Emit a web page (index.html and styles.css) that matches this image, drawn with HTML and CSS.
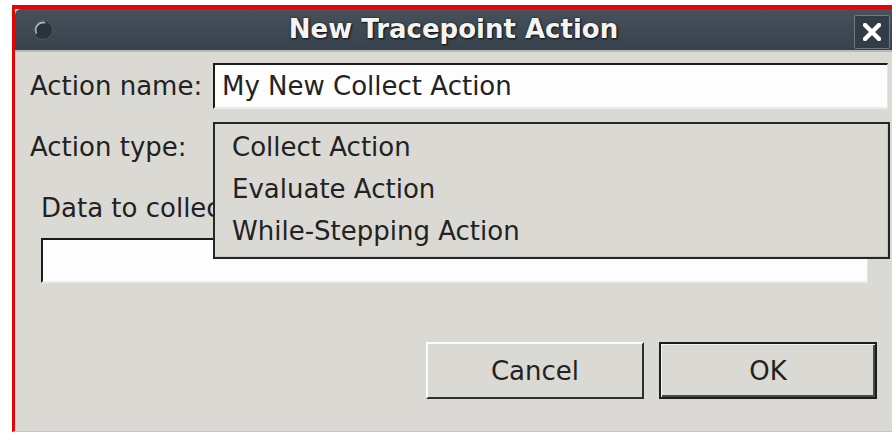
FILE: index.html
```html
<!DOCTYPE html>
<html lang="en">
<head>
<meta charset="utf-8">
<title>New Tracepoint Action</title>
<link rel="stylesheet" href="styles.css">
</head>
<body>
<div class="frame">
  <header class="titlebar">
    <div class="tb-left">
      <svg class="win-menu" width="22" height="22" viewBox="0 0 22 22">
        <circle cx="11" cy="11" r="9.5" fill="#29333c" stroke="#4d5862" stroke-width="1"/>
        <path d="M4.3 14 A7.4 7.4 0 0 1 12.5 3.7" fill="none" stroke="#aab3bb" stroke-width="1.8" stroke-linecap="round"/>
      </svg>
    </div>
    <h1 class="title">New Tracepoint Action</h1>
    <div class="tb-right">
      <button class="close" type="button" aria-label="Close">
        <svg width="18" height="18" viewBox="0 0 18 18">
          <path d="M2 2 L16 16 M16 2 L2 16" stroke="#fff" stroke-width="4.4" stroke-linecap="square"/>
        </svg>
      </button>
    </div>
  </header>

  <main class="content">
    <div class="row">
      <label class="label" for="action-name">Action name:</label>
      <div class="entry"><input id="action-name" class="entry-input" type="text" value="My New Collect Action"></div>
    </div>

    <div class="row row-type">
      <span class="label">Action type:</span>
      <div class="combo">
        <ul class="menu">
          <li class="menu-item">Collect Action</li>
          <li class="menu-item">Evaluate Action</li>
          <li class="menu-item">While-Stepping Action</li>
        </ul>
      </div>
    </div>

    <section class="data">
      <div class="data-label">Data to collect:</div>
      <div class="entry data-entry"><input class="entry-input" type="text" value=""></div>
    </section>

    <div class="buttons">
      <button class="btn" type="button">Cancel</button>
      <button class="btn btn-default" type="button">OK</button>
    </div>
  </main>
</div>
</body>
</html>
```

FILE: styles.css
```css
html, body {
  margin: 0;
  padding: 0;
  background: #ffffff;
}

body {
  font-family: "DejaVu Sans", "Liberation Sans", sans-serif;
  font-size: 26px;
  color: #222222;
  width: 892px;
  height: 433px;
  overflow: hidden;
}

.frame {
  box-sizing: border-box;
  margin: 5px 0 0 12px;
  height: 427px;
  border-top: 4px solid #e00606;
  border-left: 3px solid #e00606;
  border-bottom: 1px solid #f2b7b5;
  background: #dbd9d4;
  display: flex;
  flex-direction: column;
}

/* window title bar */
.titlebar {
  height: 41px;
  flex: none;
  display: grid;
  grid-template-columns: 1fr auto 1fr;
  align-items: center;
  background: linear-gradient(#46515b, #37424c);
  border-bottom: 2px solid #b9b9b5;
  border-top-left-radius: 6px;
}

.tb-left {
  padding-left: 17px;
  display: flex;
  align-items: center;
}

.win-menu {
  display: block;
}

.title {
  margin: 0;
  font-size: 26px;
  font-weight: bold;
  color: #f4f4f4;
  text-shadow: 1px 1px 2px #0c1116, 0 0 2px #1a2027;
  line-height: 41px;
  white-space: nowrap;
}

.tb-right {
  display: flex;
  justify-content: flex-end;
  padding-right: 2px;
}

.close {
  box-sizing: border-box;
  width: 36px;
  height: 34px;
  margin-top: 4px;
  padding: 0;
  border: 1px solid #6f7982;
  border-radius: 2px;
  background: #323d47;
  display: flex;
  align-items: center;
  justify-content: center;
}

/* dialog body */
.content {
  flex: 1;
  padding: 11px 4px 0 15px;
  display: flex;
  flex-direction: column;
}

.row {
  display: flex;
  align-items: center;
  height: 46px;
}

.label {
  width: 183px;
  flex: none;
  white-space: nowrap;
}

.entry {
  flex: 1;
  box-sizing: border-box;
  height: 46px;
  background: #fdfdfd;
  border-top: 2px solid #1c1c1c;
  border-left: 2px solid #1c1c1c;
  border-right: 1px solid #e4e4e1;
  border-bottom: 2px solid #ecece9;
  display: flex;
  align-items: center;
}

.entry-input {
  width: 100%;
  border: 0;
  outline: none;
  background: transparent;
  font: inherit;
  color: #222222;
  padding: 0 0 0 7px;
}

.row-type {
  margin-top: 15px;
}

.combo {
  flex: 1;
  height: 46px;
  position: relative;
}

/* popup list of the combo box */
.menu {
  position: absolute;
  top: -2px;
  left: 0;
  right: -2px;
  box-sizing: border-box;
  height: 137px;
  margin: 0;
  padding: 2px 0 0;
  list-style: none;
  background: #dbd9d4;
  border: 2px solid #262626;
  box-shadow: inset -1px -1px 0 #c9c7c2;
  z-index: 2;
}

.menu-item {
  height: 42px;
  line-height: 42px;
  padding-left: 17px;
  white-space: nowrap;
}

.data {
  margin: 23px 20px 0 11px;
  display: flex;
  flex-direction: column;
}

.data-label {
  line-height: 30px;
  white-space: nowrap;
}

.data-entry {
  flex: none;
  margin-top: 15px;
  height: 45px;
}

.buttons {
  margin: 59px 11px 0 0;
  display: flex;
  justify-content: flex-end;
  gap: 15px;
}

.btn {
  box-sizing: border-box;
  width: 218px;
  height: 57px;
  font: inherit;
  color: #222222;
  background: #dbd9d4;
  border-style: solid;
  border-width: 2px;
  border-color: #fbfbfa #2e2e2e #2e2e2e #fbfbfa;
  padding: 0;
}

.btn-default {
  border-color: #1d1d1d;
  box-shadow: inset 1px 1px 0 #f4f4f2, inset -2px -2px 0 #4a4a4a;
}
```
